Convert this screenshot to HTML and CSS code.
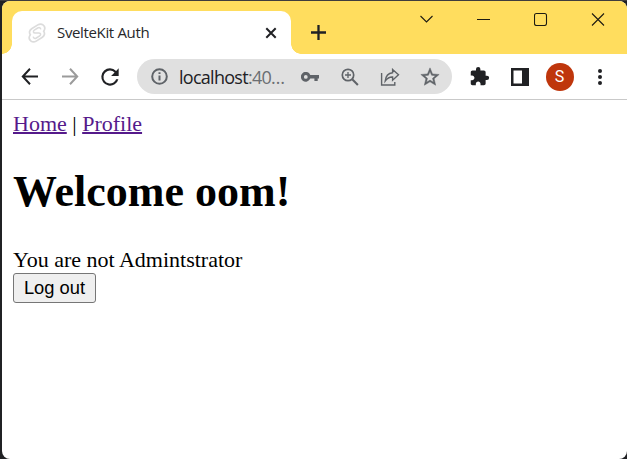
FILE: index.html
```html
<!DOCTYPE html>
<html lang="en">
<head>
<meta charset="utf-8">
<title>SvelteKit Auth</title>
<link rel="stylesheet" href="styles.css">
</head>
<body>
<div class="window">
  <header class="tabstrip">
    <div class="tab">
      <svg class="favicon" width="18" height="20" viewBox="0 0 18 20" fill="none" stroke="#dcdcdc" stroke-width="1.700"><path d="M15.700 8.200c1.700-2.500 1-5-.7-6.300-1.600-1.200-3.600-1-5.200 0L4 5.500C1.300 7.200.9 9.600 2.300 11.800c-1.700 2.500-1 5 .7 6.300 1.600 1.200 3.600 1 5.200 0L14 14.500c2.700-1.700 3.100-4.100 1.700-6.300z"/><path d="M12.800 6.300C12.400 4.500 11 4.200 9.700 5L6.300 7.200c-1.500 1-1.100 2.800.7 2.800h4c1.800 0 2.200 1.800.7 2.800L8.300 15c-1.300.8-2.700.5-3.100-1.300" stroke-width="1.500"/></svg>
      <span class="tab-title">SvelteKit Auth</span>
      <svg class="tab-close" width="12" height="12" viewBox="0 0 12 12" fill="none" stroke="#202124" stroke-width="2"><path d="M1.300 1.300l9.400 9.400M10.700 1.300L1.300 10.700"/></svg>
    </div>
    <svg class="new-tab" width="16" height="16" viewBox="0 0 16 16" fill="none" stroke="#202124" stroke-width="2.300"><path d="M8.500 1v15M1 8.500h15"/></svg>
    <div class="controls">
      <svg width="14" height="14" viewBox="0 0 14 14"><path d="M.5 4l6 6 6-6"/></svg>
      <svg width="14" height="14" viewBox="0 0 14 14"><path d="M0 7.500h13"/></svg>
      <svg width="14" height="14" viewBox="0 0 14 14"><rect x=".5" y="1.500" width="12" height="12" rx="2"/></svg>
      <svg width="14" height="14" viewBox="0 0 14 14"><path d="M1 1.500l12 12M13 1.500L1 13.500"/></svg>
    </div>
  </header>

  <div class="toolbar">
    <span class="cell"><svg width="18" height="18" viewBox="0 0 18 18" fill="none" stroke="#202124" stroke-width="2"><path d="M17 8.500H2.500M9 .8L1.800 8.500 9 16.200"/></svg></span>
    <span class="cell"><svg width="18" height="18" viewBox="0 0 18 18" fill="none" stroke="#9b9b9b" stroke-width="2"><path d="M1 8.500h14.500M9 .8l7.200 7.700L9 16.200"/></svg></span>
    <span class="cell"><svg width="26" height="26" viewBox="0 0 24 24" fill="#202124"><path d="M17.650 6.350A7.960 7.960 0 0 0 12 4a8 8 0 1 0 7.730 10h-2.080A6 6 0 1 1 12 6c1.660 0 3.140.69 4.220 1.780L13 11h7V4z"/></svg></span>
    <div class="omnibox">
      <svg class="info" width="17" height="17" viewBox="0 0 17 17" fill="none" stroke="#5f6368"><circle cx="8.500" cy="8.500" r="7.300" stroke-width="2"/><path d="M8.500 7.500v5M8.500 4.300V6" stroke-width="2"/></svg>
      <span class="url">localhost<span class="port">:40…</span></span>
      <div class="actions">
        <span class="cell"><svg width="18" height="10" viewBox="0 0 18 10" fill="#5f6368"><path fill-rule="evenodd" d="M9.300 3H18v3.600h-1.300V9h-3.300V6.600H9.300A4.900 4.900 0 1 1 9.300 3zM4.800 3a1.900 1.900 0 1 0 0 3.800 1.900 1.900 0 0 0 0-3.800z"/></svg></span>
        <span class="cell"><svg width="18" height="18" viewBox="0 0 18 18" fill="none" stroke="#5f6368" stroke-width="1.700"><circle cx="7" cy="7" r="5.700"/><path d="M11.200 11.200l5.700 5.700" stroke-width="2.100"/><path d="M7 4v6M4 7h6" stroke-width="1.300"/></svg></span>
        <span class="cell"><svg width="20" height="18" viewBox="0 0 20 18" fill="none" stroke="#5f6368" stroke-width="1.400"><path d="M1.600 5v12h13.200v-3"/><path d="M12.600 1.400l5.900 5.400-5.900 5.400V9C9 8.800 7.200 10.300 5.200 13 5.700 8.200 8.500 5 12.600 4.700z"/></svg></span>
        <span class="cell"><svg width="22" height="22" viewBox="0 0 24 24" fill="#5f6368" stroke="#5f6368" stroke-width=".5"><path d="M22 9.240l-7.190-.62L12 2 9.190 8.630 2 9.240l5.460 4.730L5.820 21 12 17.270 18.180 21l-1.630-7.030L22 9.240zM12 15.400l-3.760 2.270 1-4.280-3.320-2.880 4.380-.38L12 6.100l1.710 4.040 4.380.38-3.320 2.880 1 4.280L12 15.400z"/></svg></span>
      </div>
    </div>
    <div class="extras">
      <span class="cell"><svg width="21" height="21" viewBox="0 0 24 24" fill="#202124"><path d="M20.500 11H19V7c0-1.100-.9-2-2-2h-4V3.500a2.500 2.500 0 0 0-5 0V5H4c-1.100 0-1.990.9-1.990 2v3.800H3.500c1.490 0 2.700 1.210 2.700 2.700s-1.210 2.700-2.700 2.700H2V20c0 1.100.9 2 2 2h3.800v-1.500c0-1.490 1.210-2.700 2.700-2.700s2.700 1.210 2.700 2.700V22H17c1.100 0 2-.9 2-2v-4h1.500a2.500 2.500 0 0 0 0-5z"/></svg></span>
      <span class="cell"><svg width="18" height="18" viewBox="0 0 18 18"><path fill="#202124" fill-rule="evenodd" d="M0 0h18v18H0zM2.500 2.500v13H11v-13z"/></svg></span>
      <span class="cell"><span class="avatar">S</span></span>
      <span class="cell"><svg width="4" height="16" viewBox="0 0 4 16" fill="#202124"><circle cx="2" cy="2" r="2"/><circle cx="2" cy="8" r="2"/><circle cx="2" cy="14" r="2"/></svg></span>
    </div>
  </div>

  <main class="page">
    <nav><a href="#home">Home</a> | <a href="#profile">Profile</a></nav>
    <h1>Welcome oom!</h1>
    <div>You are not Admintstrator</div>
    <button class="logout" type="button">Log out</button>
  </main>
</div>
</body>
</html>
```
FILE: styles.css
```css
* {
  box-sizing: border-box;
}

html {
  height: 100%;
}

body {
  height: 100%;
  margin: 0;
  padding: 1px 0 0 2px;
  background: linear-gradient(#403d3d 1px, #202124 1px);
  overflow: hidden;
}

svg {
  display: block;
  flex: none;
}

.window {
  display: flex;
  flex-direction: column;
  height: 458px;
  background: #fff;
  border-radius: 8px;
  overflow: hidden;
}

.tabstrip {
  display: flex;
  height: 53px;
  padding: 10px 0 0 10px;
  background: #ffdd5e;
  font-family: "Open Sans", "Noto Sans", sans-serif;
}

.tab {
  position: relative;
  display: flex;
  align-items: center;
  width: 279px;
  height: 43px;
  padding: 0 14px 0 16px;
  background: #fff;
  border-radius: 10px 10px 0 0;
}

/* Flared feet joining the tab to the toolbar */
.tab::before,
.tab::after {
  content: "";
  position: absolute;
  bottom: 0;
  width: 10px;
  height: 10px;
}

.tab::before {
  right: 100%;
  background: radial-gradient(circle at 0 0, transparent 9.500px, #fff 10px);
}

.tab::after {
  left: 100%;
  background: radial-gradient(circle at 100% 0, transparent 9.500px, #fff 10px);
}

.tab-title {
  margin: 0 0 2px 11px;
  color: #27282b;
  font-size: 15px;
  letter-spacing: -0.350px;
  white-space: nowrap;
}

.tab-close {
  margin-left: auto;
}

.new-tab {
  margin: 13px 0 0 19px;
}

.controls {
  display: flex;
  gap: 43px;
  margin: 1px 0 0 auto;
  padding-right: 22px;
  fill: none;
  stroke: #1d1b12;
  stroke-width: 1.100;
}

.toolbar {
  display: flex;
  align-items: center;
  height: 46px;
  padding-left: 8px;
  border-bottom: 1px solid #c9c9c9;
}

.cell {
  display: flex;
  flex: none;
  align-items: center;
  justify-content: center;
  width: 40px;
  height: 36px;
}

.omnibox {
  display: flex;
  align-items: center;
  width: 315px;
  height: 35px;
  margin-left: 7px;
  padding: 0 2.500px 0 14px;
  background: #e0e0e0;
  border-radius: 18px;
}

.url {
  margin-left: 11px;
  color: #202124;
  font-family: "Open Sans", "Noto Sans", sans-serif;
  font-size: 18px;
  letter-spacing: -0.720px;
  white-space: nowrap;
}

.port {
  color: #6b6e72;
}

.actions {
  display: flex;
  margin-left: auto;
}

.extras {
  display: flex;
  margin-left: 7.500px;
}

.avatar {
  display: flex;
  align-items: center;
  justify-content: center;
  width: 28px;
  height: 28px;
  border-radius: 50%;
  background: #bf360c;
  color: #fff;
  font: 16px Roboto, sans-serif;
}

.page {
  flex: 1;
  padding: 11px;
  color: #000;
  font: 22px "Liberation Serif", serif;
}

.page a {
  color: #551a8b;
  text-decoration-thickness: 2px;
}

.page h1 {
  margin: 28.500px 0 30.500px;
  font-size: 44px;
}

.logout {
  display: block;
  width: 83px;
  height: 30px;
  padding: 0;
  border: 1px solid #767676;
  border-radius: 3px;
  background: #efefef;
  color: #000;
  font: 18.330px "Liberation Sans", sans-serif;
}
```
